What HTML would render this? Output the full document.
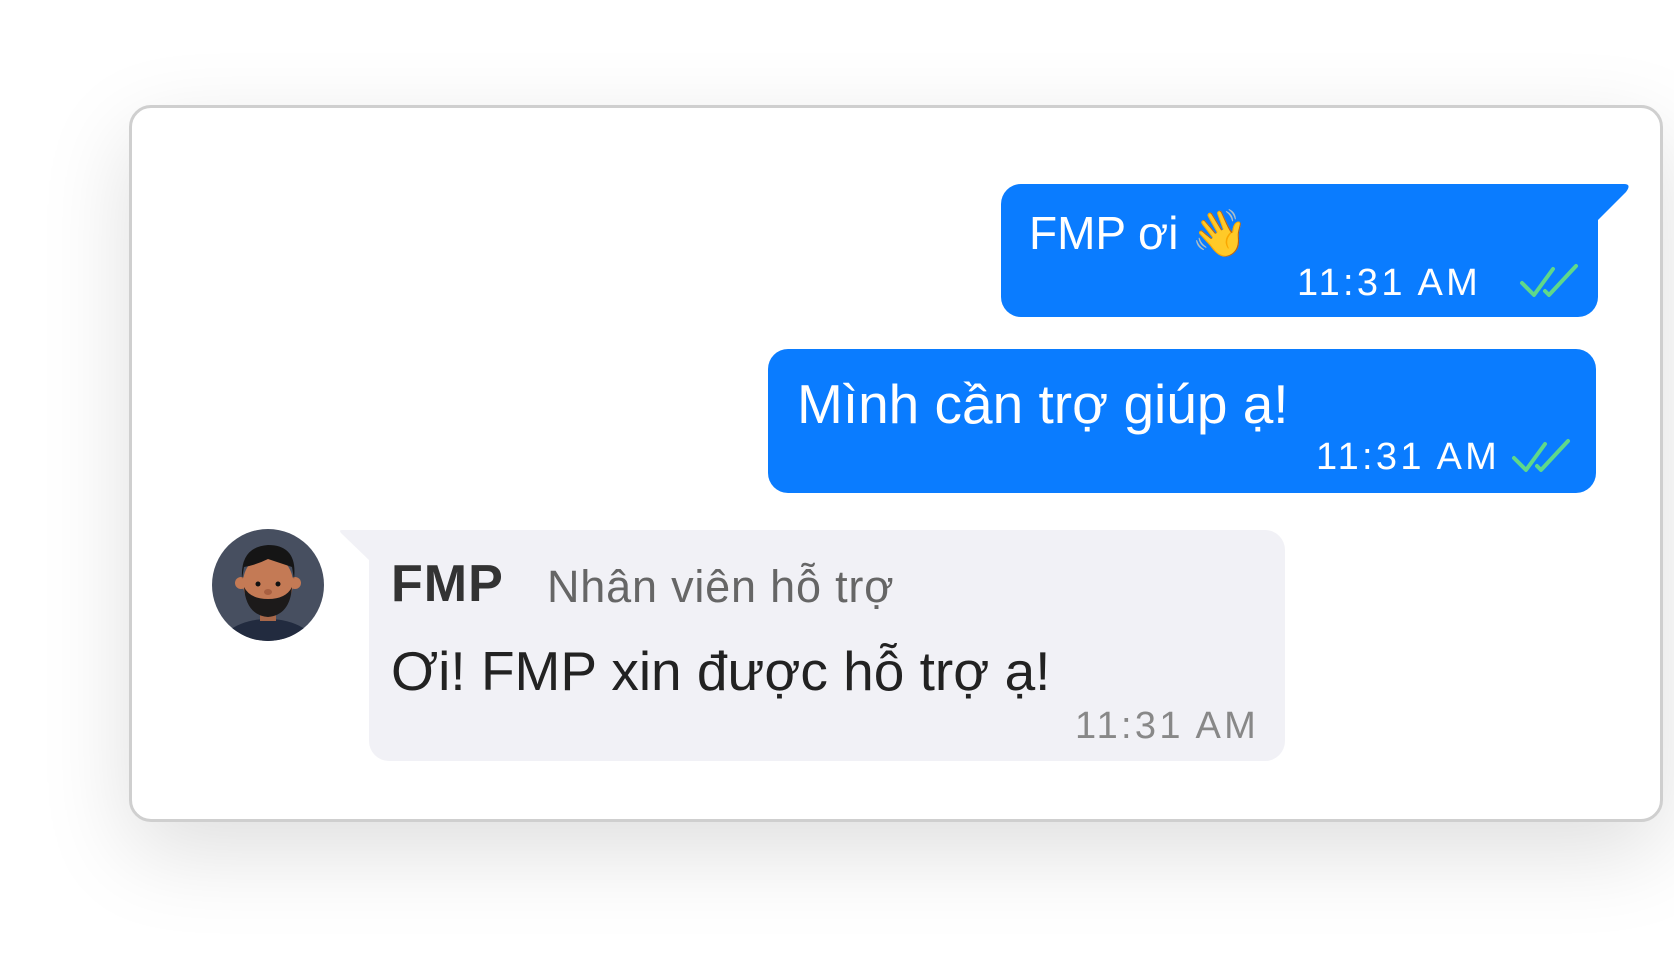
<!DOCTYPE html>
<html><head><meta charset="utf-8"><style>
html,body{margin:0;padding:0;background:#fff;width:1674px;height:972px;overflow:hidden;font-family:"Liberation Sans",sans-serif;}
.card{position:absolute;left:129px;top:105px;width:1528px;height:711px;border:3px solid #cfcfcf;border-radius:22px;background:#fff;box-shadow:0 30px 90px rgba(0,0,0,0.13);}
.abs{position:absolute;}
.b{background:#0a7cff;color:#fff;}
.t{position:absolute;white-space:nowrap;line-height:1;}
.time{font-weight:300;font-size:38px;letter-spacing:3.3px;}
</style></head><body>
<div class="card"></div>
<!-- bubble 1 -->
<div class="abs b" style="left:1001px;top:184px;width:597px;height:133px;border-radius:20px 0 20px 20px;"></div>
<svg class="abs" style="left:1560px;top:184px" width="72" height="40"><path d="M0 0 H64 Q72 0 66 8 L38 36 V40 H0Z" fill="#0a7cff"/></svg>
<div class="t" style="left:1029px;top:210px;font-size:46px;color:#fff;">FMP ơi <span style="font-family:'Noto Color Emoji','DejaVu Sans',sans-serif;color:#f5b82e">👋</span></div>
<div class="t time" style="left:1297px;top:264px;color:#fff;">11:31 AM</div>
<svg class="abs" style="left:1519px;top:263px" width="62" height="36"><path d="M3 20 L15 32 L34 6 M26 28 L30 32 L57 3" stroke="#5fd88a" stroke-width="4" fill="none" stroke-linecap="round" stroke-linejoin="round"/></svg>
<!-- bubble 2 -->
<div class="abs b" style="left:768px;top:349px;width:828px;height:144px;border-radius:20px;"></div>
<div class="t" style="left:797px;top:377px;font-size:55px;color:#fff;">Mình cần trợ giúp ạ!</div>
<div class="t time" style="left:1316px;top:438px;color:#fff;">11:31 AM</div>
<svg class="abs" style="left:1511px;top:438px" width="62" height="36"><path d="M3 20 L15 32 L34 6 M26 28 L30 32 L57 3" stroke="#5fd88a" stroke-width="4" fill="none" stroke-linecap="round" stroke-linejoin="round"/></svg>
<!-- bubble 3 -->
<div class="abs" style="left:369px;top:530px;width:916px;height:231px;background:#f1f1f6;border-radius:0 20px 20px 20px;"></div>
<svg class="abs" style="left:338px;top:530px" width="34" height="34"><path d="M31 0 H4 Q0 0 4 4 L31 30Z" fill="#f1f1f6"/></svg>
<!-- avatar -->
<svg class="abs" style="left:212px;top:529px" width="112" height="112">
<defs><clipPath id="c"><circle cx="56" cy="56" r="56"/></clipPath></defs>
<circle cx="56" cy="56" r="56" fill="#474f60"/>
<g clip-path="url(#c)">
<ellipse cx="56" cy="118" rx="48" ry="28" fill="#222b3f"/>
<rect x="48" y="78" width="16" height="14" fill="#a8684a"/>
<circle cx="29" cy="54" r="6" fill="#c47a55"/><circle cx="83" cy="54" r="6" fill="#c47a55"/>
<ellipse cx="56" cy="54" rx="25" ry="28" fill="#c47a55"/>
<path d="M32 58 Q34 86 56 88 Q78 86 80 58 Q74 70 56 70 Q38 70 32 58Z" fill="#1c1a1a"/>
<path d="M30 50 Q28 18 56 16 Q86 16 82 50 L80 38 Q68 34 56 30 Q44 36 32 38Z" fill="#151515"/>
<circle cx="46" cy="55" r="2.5" fill="#111"/><circle cx="66" cy="55" r="2.5" fill="#111"/>
<ellipse cx="56" cy="63" rx="4" ry="3" fill="#a85f40"/>
</g></svg>
<div class="t" style="left:391px;top:558px;font-size:52px;color:#333;font-weight:bold;letter-spacing:1px;">FMP</div>
<div class="t" style="left:547px;top:564px;font-size:45px;color:#666;letter-spacing:0.8px;">Nhân viên hỗ trợ</div>
<div class="t" style="left:391px;top:644px;font-size:55px;color:#222;">Ơi! FMP xin được hỗ trợ ạ!</div>
<div class="t time" style="left:1075px;top:707px;color:#888;">11:31 AM</div>
</body></html>
